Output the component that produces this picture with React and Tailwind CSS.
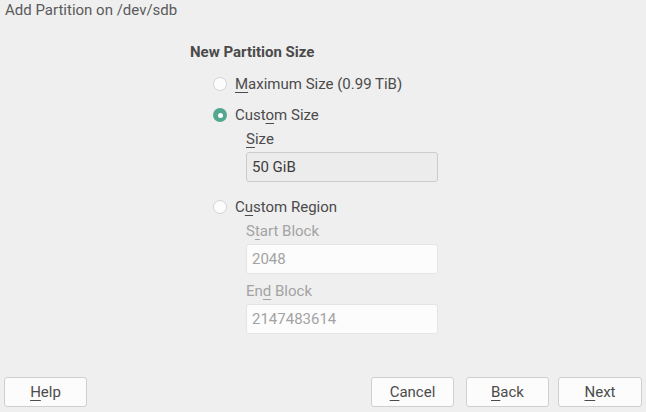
import React from 'react';

function Radio({ checked }) {
  return checked ? (
    <span className="flex h-[14px] w-[14px] items-center justify-center rounded-full bg-[#52a88f]">
      <span className="h-[5px] w-[5px] rounded-full bg-white" />
    </span>
  ) : (
    <span className="h-[14px] w-[14px] rounded-full border border-[#d4d4d4] bg-[#fcfcfc]" />
  );
}

function Key({ children }) {
  return <span className="underline underline-offset-[3px] decoration-1">{children}</span>;
}

function Field({ label, value, disabled }) {
  return (
    <div className="flex flex-col">
      <div className={`h-[18px] leading-[18px] ${disabled ? 'text-[#a3a3a3]' : 'text-[#4b4b4b]'}`}>{label}</div>
      <div
        className={`mt-[4px] flex h-[30px] w-[192px] items-center rounded-[3px] border px-[5px] ${
          disabled ? 'border-[#e4e4e4] bg-[#fcfcfc] text-[#a3a3a3]' : 'border-[#cbcbcb] bg-[#ececec] text-[#3c3c3c]'
        }`}
      >
        {value}
      </div>
    </div>
  );
}

function Button({ children, className = '' }) {
  return (
    <button className={`flex h-[30px] w-[83px] items-center justify-center rounded-[3px] border border-[#cfcfcf] bg-[#fcfcfc] text-[#4b4b4b] ${className}`}>
      {children}
    </button>
  );
}

export default function App() {
  return (
    <div
      className="flex h-[412px] w-[646px] flex-col bg-[#efefef] text-[15px] text-[#4b4b4b]"
      style={{ fontFamily: 'Roboto, "Liberation Sans", sans-serif' }}
    >
      <div className="px-[5px] pt-[1px] text-[15px] leading-[18px] text-[#5a5a5a]">Add Partition on /dev/sdb</div>

      <div className="pl-[190px] pt-[24px]">
        <div className="h-[18px] font-bold leading-[18px] text-[#4a4a4a]">New Partition Size</div>

        <div className="mt-[14px] flex h-[18px] items-center gap-[8px] pl-[23px]">
          <Radio />
          <span className="leading-[18px]">
            <Key>M</Key>aximum Size (0.99 TiB)
          </span>
        </div>

        <div className="mt-[13px] flex h-[18px] items-center gap-[8px] pl-[23px]">
          <Radio checked />
          <span className="leading-[18px]">
            Cust<Key>o</Key>m Size
          </span>
        </div>

        <div className="mt-[6px] pl-[56px]">
          <Field label={<><Key>S</Key>ize</>} value="50 GiB" />
        </div>

        <div className="mt-[16px] flex h-[18px] items-center gap-[8px] pl-[23px]">
          <Radio />
          <span className="leading-[18px]">
            C<Key>u</Key>stom Region
          </span>
        </div>

        <div className="mt-[6px] flex flex-col gap-[8px] pl-[56px]">
          <Field disabled label={<>S<Key>t</Key>art Block</>} value="2048" />
          <Field disabled label={<>En<Key>d</Key> Block</>} value="2147483614" />
        </div>
      </div>

      <div className="mt-auto flex items-center px-[4px] pb-[5px]">
        <Button>
          <Key>H</Key>elp
        </Button>
        <div className="ml-auto flex gap-[12px]">
          <Button>
            <Key>C</Key>ancel
          </Button>
          <Button>
            <Key>B</Key>ack
          </Button>
          <Button className="-ml-[3px] w-[84px]">
            <Key>N</Key>ext
          </Button>
        </div>
      </div>
    </div>
  );
}
